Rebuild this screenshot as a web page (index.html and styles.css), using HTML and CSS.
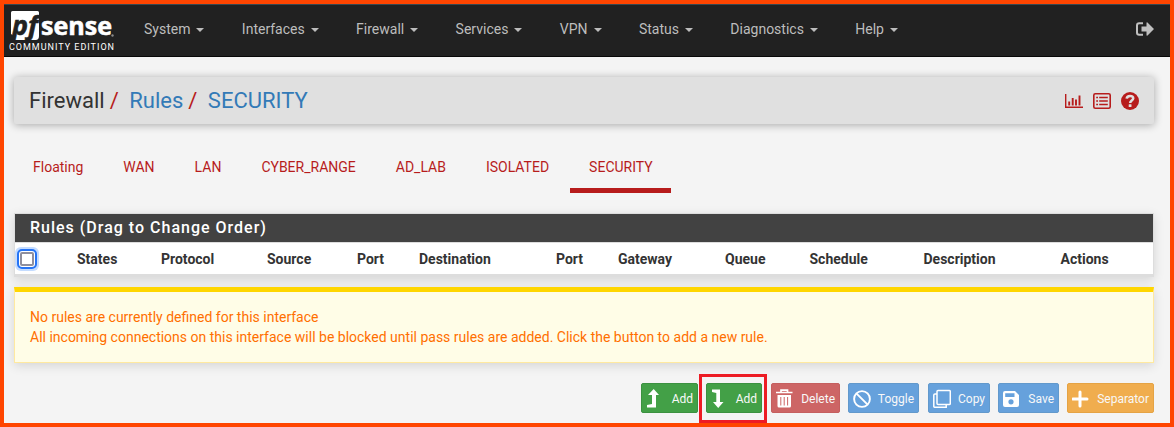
FILE: index.html
```html
<!DOCTYPE html>
<html lang="en">
<head>
<meta charset="utf-8">
<title>Firewall: Rules: SECURITY</title>
<link rel="stylesheet" href="styles.css">
</head>
<body>
<nav class="navbar">
  <svg class="logo" width="110" height="51" viewBox="0 0 110 51">
    <path d="M3.500 6H28.500Q30 6 30 7.500V31Q30 35 26.500 35H5V31L2 29V7.500Q2 6 3.500 6Z" fill="#fff"/>
    <text class="logo-pf" x="3" y="30" textLength="26" lengthAdjust="spacingAndGlyphs">pf</text>
    <text class="logo-sense" x="32" y="30" textLength="71" lengthAdjust="spacingAndGlyphs">sense</text>
    <circle cx="103.500" cy="30.500" r="1.200" fill="#888"/>
    <text class="logo-edition" x="0" y="45" textLength="105">COMMUNITY EDITION</text>
  </svg>
  <ul class="menu">
    <li>System</li><li>Interfaces</li><li>Firewall</li><li>Services</li><li>VPN</li><li>Status</li><li>Diagnostics</li><li>Help</li>
  </ul>
  <svg class="logout" width="18" height="14" viewBox="0 0 18 14"><path d="M7 1.200H3.200Q1 1.200 1 3.400V10.600Q1 12.800 3.200 12.800H7" fill="none" stroke="#c0c0c0" stroke-width="2"/><path d="M5.500 4.500H10.500V.8Q10.700 0 11.500 .6L18 7 11.500 13.400Q10.700 14 10.500 13.200V9.500H5.500Z" fill="#c0c0c0"/></svg>
</nav>
<main class="content">
  <header class="crumbs">
    <div class="trail"><span>Firewall</span><i>/</i><a>Rules</a><i>/</i><a>SECURITY</a></div>
    <div class="tools">
      <svg width="18" height="16" viewBox="0 0 18 16"><path d="M.7 1V14.300H18" fill="none" stroke="#b71c1c" stroke-width="1.400"/><path d="M4.200 8.500V12.500M7.700 5V12.500M11 6.500V12.500M14.500 2.500V12.500" stroke="#b71c1c" stroke-width="1.900"/></svg>
      <svg width="18" height="16" viewBox="0 0 18 16"><rect x=".8" y=".8" width="16.400" height="14.400" rx="1.500" fill="none" stroke="#b71c1c" stroke-width="1.600"/><path d="M3.200 4.500H5M3.200 8H5M3.200 11.500H5M6.200 4.500H14.800M6.200 8H14.800M6.200 11.500H14.800" stroke="#b71c1c" stroke-width="1.600"/></svg>
      <svg width="18" height="18" viewBox="0 0 18 18"><circle cx="9" cy="9" r="9" fill="#b71c1c"/><path d="M5.700 6.700C6 3 12.400 3.100 12.200 6.500C12 8.700 9.200 8.500 9.200 11" fill="none" stroke="#e0e0e0" stroke-width="2.600"/><rect x="7.700" y="12.300" width="2.800" height="2.700" rx=".5" fill="#e0e0e0"/></svg>
    </div>
  </header>
  <ul class="tabs">
    <li>Floating</li><li>WAN</li><li>LAN</li><li>CYBER_RANGE</li><li>AD_LAB</li><li>ISOLATED</li><li class="active">SECURITY</li>
  </ul>
  <section class="panel">
    <h2>Rules (Drag to Change Order)</h2>
    <div class="columns">
      <span class="check"></span><b>States</b><b>Protocol</b><b>Source</b><b>Port</b><b>Destination</b><b>Port</b><b>Gateway</b><b>Queue</b><b>Schedule</b><b>Description</b><b>Actions</b>
    </div>
  </section>
  <section class="alert">
    <p>No rules are currently defined for this interface</p>
    <p>All incoming connections on this interface will be blocked until pass rules are added. Click the button to add a new rule.</p>
  </section>
  <div class="actions">
    <span class="btn green add-top"><svg width="18" height="20" viewBox="0 0 18 20"><path d="M0 18.500V16L5 15V6H1L6.700 0 12 6H9V18.500Z" fill="#fff"/></svg>Add</span>
    <span class="btn green add-end"><svg width="18" height="20" viewBox="0 0 18 20"><path d="M0 .5H8V13H11.500L6.200 19 1 13H4.300V4L0 3Z" fill="#fff"/></svg>Add<span class="highlight"></span></span>
    <span class="btn red delete"><svg width="18" height="20" viewBox="0 0 18 20"><path d="M0 3.500H16.500M5 3V1.200H11.500V3" fill="none" stroke="#fff" stroke-width="1.700"/><path d="M1.500 6H15V17Q15 18.500 13.500 18.500H3Q1.500 18.500 1.500 17Z" fill="#fff"/><path d="M4.800 8V16.500M8.200 8V16.500M11.600 8V16.500" stroke="#cd6565" stroke-width="1"/></svg>Delete</span>
    <span class="btn blue toggle"><svg width="18" height="20" viewBox="0 0 18 20"><circle cx="9" cy="10" r="7.900" fill="none" stroke="#fff" stroke-width="1.900"/><path d="M3.600 4.600L14.400 15.400" stroke="#fff" stroke-width="1.900"/></svg>Toggle</span>
    <span class="btn blue copy"><svg width="18" height="20" viewBox="0 0 18 20"><rect x="4" y="1.500" width="13.300" height="14" rx="1" fill="none" stroke="#fff" stroke-width="1.500"/><path d="M4 5H2Q.8 5 .8 6V17.500Q.8 18.200 1.500 18.200H13.200V15.500" fill="none" stroke="#fff" stroke-width="1.500"/></svg>Copy</span>
    <span class="btn blue save"><svg width="18" height="20" viewBox="0 0 18 20"><path fill-rule="evenodd" d="M2 2H12L16 6V16Q16 18 14 18H2Q0 18 0 16V4Q0 2 2 2ZM2.200 4.300V8H11.500V4.300ZM8 10.200A2.600 2.600 0 1 0 8 15.400A2.600 2.600 0 1 0 8 10.200Z" fill="#fff"/></svg>Save</span>
    <span class="btn orange separator"><svg width="18" height="20" viewBox="0 0 18 20"><path d="M8 3V17M1 10H15" stroke="#fff" stroke-width="3" stroke-linecap="round"/></svg>Separator</span>
  </div>
</main>
</body>
</html>
```
FILE: styles.css
```css
* { box-sizing: border-box; }
body {
  margin: 0;
  width: 1174px;
  height: 427px;
  overflow: hidden;
  border: 4px solid #ff4500;
  background: #f4f4f4;
  font: 14px/20px Roboto, sans-serif;
  color: #333;
}
ul, p, h2 { margin: 0; padding: 0; }
ul { list-style: none; display: flex; }
.navbar {
  display: flex;
  height: 53px;
  padding-left: 5px;
  background: #212121;
  border-top: 1px solid #37474f;
  border-bottom: 1px solid #080808;
}
.logo { flex: none; overflow: visible; }
.logo-pf { font: italic bold 27px "Open Sans", sans-serif; fill: #212121; stroke: #212121; stroke-width: .6px; }
.logo-sense { font: bold 25px "Open Sans", sans-serif; fill: #fff; stroke: #fff; stroke-width: .6px; }
.logo-edition { font: 9px Roboto, sans-serif; fill: #fff; }
.menu { margin: 14px 0 0 25px; gap: 37.4px; color: #bdbdbd; }
.menu li { display: flex; align-items: center; height: 20px; }
.menu li::after {
  content: "";
  margin: 2px 0 0 6px;
  border: 4px solid transparent;
  border-top-color: #bdbdbd;
  border-bottom: 0;
}
.logout { margin: 17px 16px 0 auto; }
.content { padding: 20px 16px 0 10px; }
.crumbs {
  display: flex;
  justify-content: space-between;
  align-items: center;
  height: 47px;
  padding: 0 15px;
  background: #e0e0e0;
  border-radius: 2px;
  box-shadow: 0 1px 9px rgba(0, 0, 0, .32);
}
.trail { display: flex; font-size: 22px; line-height: 24px; }
.trail a { color: #337ab7; }
.trail i { font-style: normal; color: #b71c1c; margin: 0 10.5px 0 5px; }
.tools { display: flex; align-items: center; gap: 10px; }
.tabs { height: 69px; padding-top: 24px; color: #b71c1c; }
.tabs li { height: 45px; padding: 9px 19px 0; margin-right: 2px; }
.tabs .active { border-bottom: 5px solid #b71c1c; padding-right: 18px; }
.panel {
  margin-top: 20px;
  border: 1px solid #ddd;
  border-bottom-width: 3px;
  background: #fff;
  box-shadow: 0 3px 10px rgba(0, 0, 0, .13);
}
.panel h2 {
  height: 29px;
  padding-left: 15px;
  background: #424242;
  border-bottom: 1px solid #ddd;
  color: #fff;
  font-size: 16px;
  font-weight: 500;
  line-height: 27px;
  letter-spacing: 1px;
}
.columns {
  display: grid;
  grid-template-columns: 62px 84px 106px 90px 62px 137px 62px 107px 84.5px 114px 137px 1fr;
  align-items: center;
  height: 31px;
}
.check {
  width: 14px;
  height: 14px;
  margin-left: 5px;
  border: 2px solid #8f8f9d;
  border-radius: 2px;
  background: #fff;
  outline: 2px solid #2574f5;
  outline-offset: 1px;
  box-shadow: 0 0 0 1px #fff, 0 0 0 5px #c4dcff;
}
.alert {
  height: 76px;
  margin-top: 10px;
  padding: 15px;
  background: #fffde7;
  border: 1px solid #ffe9a0;
  border-top: 5px solid #ffd600;
  color: #ff6f00;
  box-shadow: 0 3px 10px rgba(0, 0, 0, .12);
}
.actions { display: flex; justify-content: flex-end; margin-top: 20px; }
.btn {
  position: relative;
  display: flex;
  align-items: center;
  justify-content: space-between;
  height: 30px;
  padding: 2px 4px 0 5px;
  border: 1px solid;
  border-radius: 2px;
  color: #f8f8f8;
  font-size: 12px;
}
.btn svg { flex: none; }
.green { background: #43a047; border-color: #3b9140; }
.red { background: #cd6565; border-color: #c55f5f; }
.blue { background: #66a1dc; border-color: #6299cc; }
.orange { background: #f0ad4e; border-color: #e5a344; }
.add-top { width: 57px; margin-right: 8px; }
.add-end { width: 56px; margin-right: 9px; }
.delete { width: 69px; margin-right: 8px; padding-left: 4px; }
.toggle { width: 71px; margin-right: 9px; padding-left: 4px; }
.copy { width: 62px; margin-right: 8px; padding-left: 4px; }
.save { width: 61px; margin-right: 8px; padding-left: 4px; }
.separator { width: 87px; padding-left: 4px; }
.highlight {
  position: absolute;
  top: -10px;
  left: -8px;
  width: 68px;
  height: 49px;
  border: 3px solid #ed1c24;
}
```
